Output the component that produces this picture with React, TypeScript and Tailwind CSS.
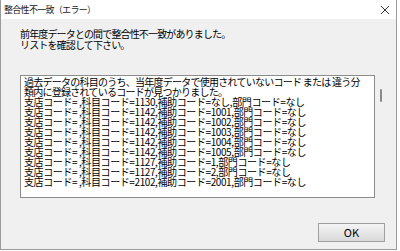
import React from 'react';

const font = { fontFamily: '"Noto Sans CJK JP", "Liberation Sans", sans-serif' };

const rows = [
  '過去データの科目のうち、当年度データで使用されていないコード または 違う分',
  '類内に登録されているコードが見つかりました。',
  '支店コード= ,科目コード=1130,補助コード=なし,部門コード=なし',
  '支店コード= ,科目コード=1142,補助コード=1001,部門コード=なし',
  '支店コード= ,科目コード=1142,補助コード=1002,部門コード=なし',
  '支店コード= ,科目コード=1142,補助コード=1003,部門コード=なし',
  '支店コード= ,科目コード=1142,補助コード=1004,部門コード=なし',
  '支店コード= ,科目コード=1142,補助コード=1005,部門コード=なし',
  '支店コード= ,科目コード=1127,補助コード=1,部門コード=なし',
  '支店コード= ,科目コード=1127,補助コード=2,部門コード=なし',
  '支店コード= ,科目コード=2102,補助コード=2001,部門コード=なし',
];

export default function App() {
  return (
    <div className="w-[400px] h-[251px] bg-white" style={font}>
      <div className="w-[397px] h-[250px] flex flex-col bg-[#f0f0f0] border-l border-r border-b border-[#9a9a9a]">
        {/* title bar */}
        <div className="h-[19px] bg-white flex items-center justify-between pl-[3px] pr-[4px]">
          <span className="text-[9px] leading-none tracking-[-0.7px] text-[#1a1a1a]">整合性不一致（エラー）</span>
          <svg width="10" height="10" viewBox="0 0 10 10" className="mr-[2px]">
            <path d="M1 1 L9 9 M9 1 L1 9" stroke="#333" strokeWidth="1" />
          </svg>
        </div>

        <div className="flex-1 flex flex-col pl-[19px] pr-[11px] pt-[9px]">
          <div className="text-[10px] leading-[11px] tracking-[-0.85px] text-black">
            <div>前年度データとの間で整合性不一致がありました。</div>
            <div>リストを確認して下さい。</div>
          </div>

          <div className="flex mt-[25px]">
            <div className="w-[355px] h-[123px] bg-white border border-[#8c8c8c] pl-[3px] pt-[1px] overflow-hidden">
              {rows.map((r, i) => (
                <div
                  key={i}
                  className={`text-[10px] leading-[10px] text-black whitespace-pre ${
                    i < 2 ? 'tracking-[-0.75px]' : 'tracking-[-0.4px]'
                  }`}
                >
                  {r}
                </div>
              ))}
            </div>
            <div className="w-[10px] pl-[5px] pt-[14px]">
              <div className="w-[2px] h-[13px] bg-[#8a8a8a] rounded-full" />
            </div>
          </div>

          <div className="flex justify-end mt-[25px]">
            <button className="w-[67px] h-[19px] border border-[#a0a0a0] bg-gradient-to-b from-[#f4f4f4] to-[#dadada] text-[11px] leading-none text-black flex items-center justify-center">
              OK
            </button>
          </div>
        </div>
      </div>
    </div>
  );
}
